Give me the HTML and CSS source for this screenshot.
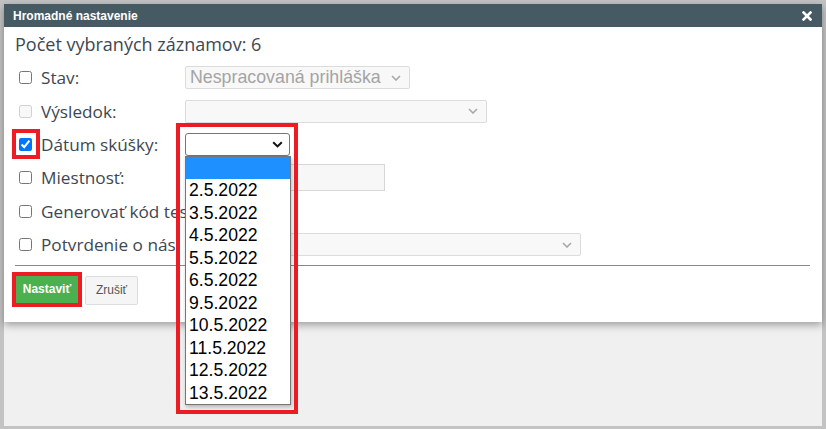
FILE: index.html
```html
<!DOCTYPE html>
<html lang="sk">
<head>
  <meta charset="UTF-8" />
  <meta name="viewport" content="width=device-width, initial-scale=1.0">
  <title>Hromadné nastavenie</title>
  <link rel="stylesheet" href="styles.css">
</head>
<body>

  <div class="screen">
    <div class="dialog">
      <div class="dialog-title">
        <span>Hromadné nastavenie</span>
        <svg class="close-icon" width="10" height="10" viewBox="0 0 10 10">
          <path d="M1.5 1.5 L8.5 8.5 M8.5 1.5 L1.5 8.5" stroke="#fff" stroke-width="2.6" stroke-linecap="square" />
        </svg>
      </div>

      <div class="dialog-body">
        <div class="count-line">Počet vybraných záznamov: 6</div>

        <div class="form-row">
          <label class="field-label"><input type="checkbox"> Stav:</label>
          <div class="select select-disabled w-stav">
            <span>Nespracovaná prihláška</span>
            <svg class="chevron" width="10" height="6" viewBox="0 0 10 6"><path d="M1 1 L5 5 L9 1" fill="none" stroke="#a8a8a8" stroke-width="1.6" /></svg>
          </div>
        </div>

        <div class="form-row">
          <label class="field-label"><input type="checkbox" disabled> Výsledok:</label>
          <div class="select select-disabled w-vysledok">
            <span></span>
            <svg class="chevron" width="10" height="6" viewBox="0 0 10 6"><path d="M1 1 L5 5 L9 1" fill="none" stroke="#a8a8a8" stroke-width="1.6" /></svg>
          </div>
        </div>

        <div class="form-row">
          <label class="field-label">
            <span class="cb-wrap"><input type="checkbox" checked><span class="mark mark-cb"></span></span>
            Dátum skúšky:
          </label>
          <div class="date-field">
            <div class="select select-active">
              <span></span>
              <svg class="chevron" width="11" height="7" viewBox="0 0 11 7"><path d="M1.2 1.2 L5.5 5.4 L9.8 1.2" fill="none" stroke="#111" stroke-width="2" /></svg>
            </div>
            <span class="mark mark-list"></span>
            <ul class="option-list">
              <li class="selected">&nbsp;</li>
              <li>2.5.2022</li>
              <li>3.5.2022</li>
              <li>4.5.2022</li>
              <li>5.5.2022</li>
              <li>6.5.2022</li>
              <li>9.5.2022</li>
              <li>10.5.2022</li>
              <li>11.5.2022</li>
              <li>12.5.2022</li>
              <li>13.5.2022</li>
            </ul>
          </div>
        </div>

        <div class="form-row">
          <label class="field-label"><input type="checkbox"> Miestnosť:</label>
          <div class="text-input w-miestnost"></div>
        </div>

        <div class="form-row">
          <label class="field-label"><input type="checkbox"> Generovať kód tes</label>
        </div>

        <div class="form-row">
          <label class="field-label"><input type="checkbox"> Potvrdenie o nás</label>
          <div class="select select-disabled w-potvrdenie">
            <span></span>
            <svg class="chevron" width="10" height="6" viewBox="0 0 10 6"><path d="M1 1 L5 5 L9 1" fill="none" stroke="#a8a8a8" stroke-width="1.6" /></svg>
          </div>
        </div>

        <hr class="divider">

        <div class="actions">
          <span class="mark-btn"><button class="btn btn-primary">Nastaviť</button></span>
          <button class="btn btn-default">Zrušiť</button>
        </div>
      </div>
    </div>
  </div>

</body>
</html>
```

FILE: styles.css
```css
* {
  margin: 0;
  padding: 0;
  box-sizing: border-box;
}

body {
  background-color: #c3c3c3;
  padding: 4px 4px 3px 4px;
  height: 429px;
  overflow: hidden;
  font-family: "Open Sans", "Liberation Sans", Arial, sans-serif;
}

.screen {
  background-color: #f0f0f0;
  height: 422px;
}

.dialog {
  background-color: #FFFFFF;
  box-shadow: 0 3px 8px rgba(0,0,0,0.35);
  position: relative;
}

.dialog-title {
  background-color: #465a64;
  color: #FFFFFF;
  height: 23px;
  padding: 0 10px 0 9px;
  display: flex;
  align-items: center;
  justify-content: space-between;
  font-family: "Liberation Sans", Arial, sans-serif;
  font-weight: bold;
  font-size: 12px;
}

.close-icon {
  display: block;
}

.dialog-body {
  padding: 0 12px 15px 11px;
  color: #3d4852;
  font-size: 17.2px;
}

.count-line {
  height: 34px;
  display: flex;
  align-items: center;
  font-size: 18px;
}

.form-row {
  height: 33.4px;
  display: flex;
  align-items: center;
}

.field-label {
  width: 170px;
  flex-shrink: 0;
  display: flex;
  align-items: center;
  white-space: nowrap;
  gap: 9px;
  height: 33px;
}

.field-label input,
.cb-wrap input {
  width: 13px;
  height: 13px;
  margin: 0 0 0 4px;
  flex-shrink: 0;
}

.cb-wrap {
  position: relative;
  display: inline-flex;
}

.mark {
  position: absolute;
  border: 4px solid #ed1c24;
  pointer-events: none;
}

.mark-cb {
  left: -3px;
  top: -9px;
  width: 28px;
  height: 30px;
}

.select {
  height: 23px;
  border: 1px solid #dcdcdc;
  border-radius: 2px;
  display: flex;
  align-items: center;
  justify-content: space-between;
  padding: 0 8px 0 4px;
  font-family: "Liberation Sans", Arial, sans-serif;
  font-size: 17.8px;
}

.select-disabled {
  background-color: #f8f8f8;
  color: #a4a4a4;
}

.select-active {
  width: 105px;
  background-color: #FFFFFF;
  border-color: #767676;
  border-radius: 3px;
  padding-right: 6px;
}

.w-stav { width: 225px; }
.w-vysledok { width: 302px; }
.w-potvrdenie { width: 396px; }

.text-input {
  height: 27px;
  background-color: #f7f7f7;
  border: 1px solid #d6d6d6;
}

.w-miestnost { width: 200px; }

.date-field {
  position: relative;
  z-index: 5;
}

.mark-list {
  left: -9px;
  top: -10px;
  width: 122px;
  height: 291px;
}

.option-list {
  position: absolute;
  left: 0;
  top: 23px;
  width: 106px;
  list-style: none;
  background-color: #FFFFFF;
  border: 1px solid #767676;
  box-shadow: 1px 2px 4px rgba(0,0,0,0.25);
  font-family: "Liberation Sans", Arial, sans-serif;
  font-size: 17.6px;
  color: #000000;
}

.option-list li {
  height: 22.5px;
  line-height: 22.5px;
  padding-left: 3px;
}

.option-list li.selected {
  background-color: #1e90ff;
}

.divider {
  border: none;
  border-top: 1px solid #888888;
  margin-top: 3.5px;
}

.actions {
  margin-top: 6px;
  display: flex;
  align-items: flex-start;
  gap: 3px;
  margin-left: -3px;
}

.mark-btn {
  display: inline-flex;
  border: 4px solid #ed1c24;
}

.btn {
  font-family: "Liberation Sans", Arial, sans-serif;
  font-size: 12px;
  height: 27px;
  cursor: pointer;
}

.btn-primary {
  width: 62px;
  background-color: #4caf50;
  color: #FFFFFF;
  font-weight: bold;
  border: none;
}

.btn-default {
  margin-top: 4px;
  width: 53px;
  height: 29px;
  background-color: #f5f5f5;
  color: #555555;
  border: 1px solid #dddddd;
  border-radius: 2px;
}
```
